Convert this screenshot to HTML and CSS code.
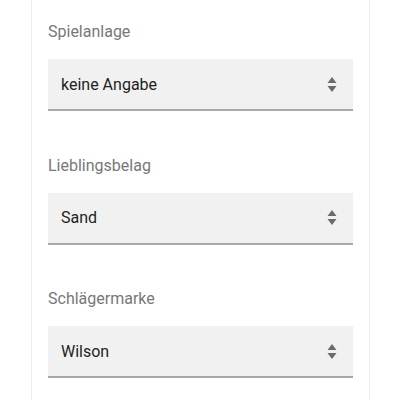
FILE: index.html
```html
<!DOCTYPE html>
<html lang="de">
<head>
<meta charset="utf-8">
<link rel="stylesheet" href="styles.css">
</head>
<body>
<div class="card">
  <div class="field">
    <div class="label">Spielanlage</div>
    <div class="select"><span class="value">keine Angabe</span>
      <svg class="arrows" width="10" height="15" viewBox="0 0 10 15"><path d="M5 0L9.5 6H0.5Z M5 15L9.5 9H0.5Z" fill="#6b6b6b"/></svg>
    </div>
  </div>
  <div class="field">
    <div class="label">Lieblingsbelag</div>
    <div class="select"><span class="value">Sand</span>
      <svg class="arrows" width="10" height="15" viewBox="0 0 10 15"><path d="M5 0L9.5 6H0.5Z M5 15L9.5 9H0.5Z" fill="#6b6b6b"/></svg>
    </div>
  </div>
  <div class="field">
    <div class="label">Schlägermarke</div>
    <div class="select"><span class="value">Wilson</span>
      <svg class="arrows" width="10" height="15" viewBox="0 0 10 15"><path d="M5 0L9.5 6H0.5Z M5 15L9.5 9H0.5Z" fill="#6b6b6b"/></svg>
    </div>
  </div>
</div>
</body>
</html>
```
FILE: styles.css
```css
html, body {
  margin: 0;
  padding: 0;
  background: #fff;
}
body {
  font-family: Roboto, "Liberation Sans", sans-serif;
}
.card {
  box-sizing: border-box;
  margin-left: 31px;
  width: 339px;
  height: 400px;
  overflow: hidden;
  padding: 20px 16px 0;
  border-left: 1px solid #ececec;
  border-right: 1px solid #ececec;
}
.field {
  margin-bottom: 42.5px;
}
.field:last-child {
  margin-bottom: 0;
}
.label {
  font-size: 16px;
  line-height: 24px;
  color: #777;
  margin-bottom: 15px;
}
.select {
  height: 50px;
  background: #f1f1f1;
  border-bottom: 2px solid #a8a8a8;
  display: flex;
  align-items: center;
  justify-content: space-between;
  padding: 0 16px 0 13px;
}
.value {
  font-size: 16px;
  color: #1e1e1e;
}
.arrows {
  display: block;
}
```
